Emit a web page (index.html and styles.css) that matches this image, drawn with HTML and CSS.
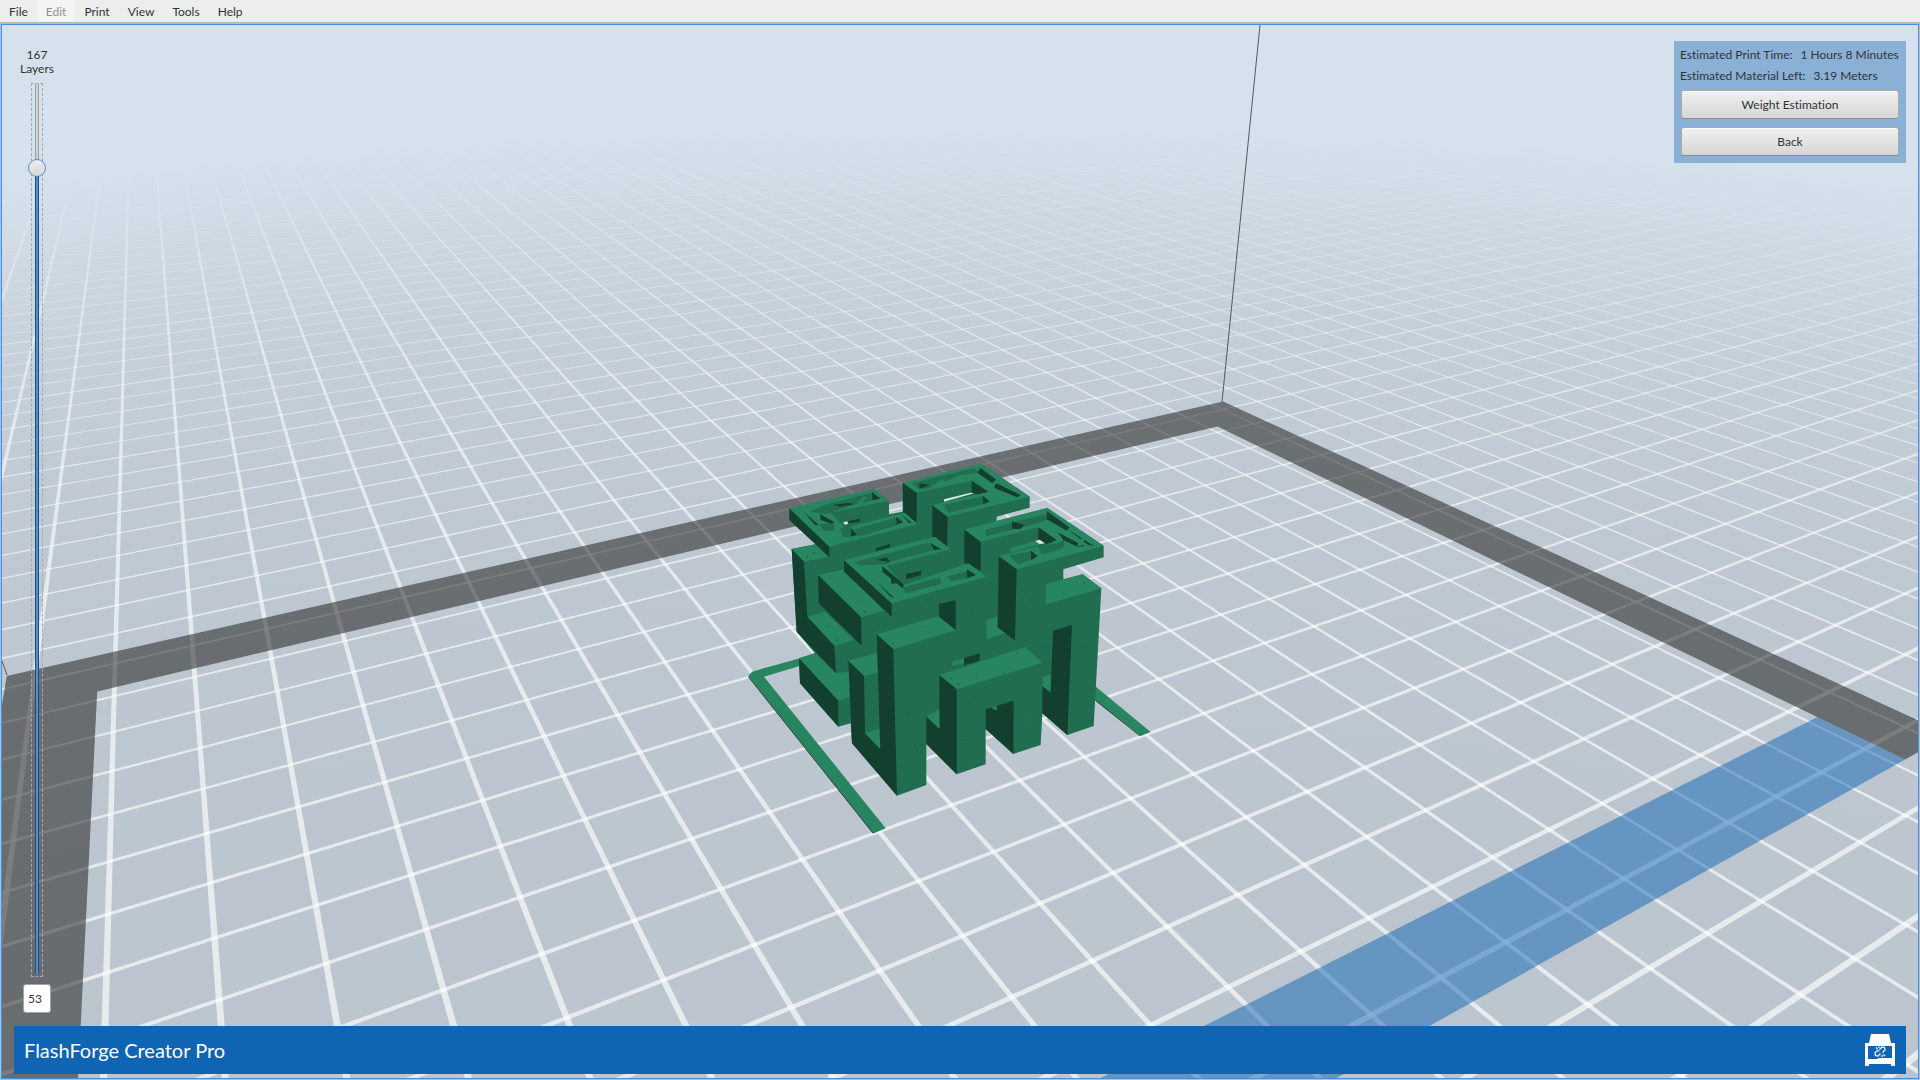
FILE: index.html
```html
<!DOCTYPE html>
<html lang="en">
<head>
<meta charset="utf-8">
<title>FlashForge Creator Pro</title>
<link rel="stylesheet" href="styles.css">
</head>
<body>
<nav class="menubar" aria-label="Main menu">
  <button type="button">File</button>
  <button type="button" disabled>Edit</button>
  <button type="button">Print</button>
  <button type="button">View</button>
  <button type="button">Tools</button>
  <button type="button">Help</button>
</nav>
<main class="viewport">
  <svg class="scene" viewBox="2 25 1916 1053" preserveAspectRatio="xMidYMid slice" role="img" aria-label="Print preview">
    <defs>
      <radialGradient id="fog" gradientUnits="userSpaceOnUse" cx="0" cy="0" r="1390" gradientTransform="translate(960 1500) scale(2.4 1)">
        <stop offset=".5" stop-color="#d5e1ec" stop-opacity="0"/>
        <stop offset=".64" stop-color="#d5e1ec" stop-opacity=".05"/>
        <stop offset=".72" stop-color="#d5e1ec" stop-opacity=".1"/>
        <stop offset=".79" stop-color="#d5e1ec" stop-opacity=".2"/>
        <stop offset=".863" stop-color="#d5e1ec" stop-opacity=".38"/>
        <stop offset=".935" stop-color="#d5e1ec" stop-opacity=".7"/>
        <stop offset=".99" stop-color="#d5e1ec"/>
      </radialGradient>
    </defs>
    <rect class="ground" x="0" y="0" width="1920" height="1080"/>
    <g id="tiles" class="tiles"></g>
    <g id="grid" class="grid"></g>
    <rect x="0" y="0" width="1920" height="1080" fill="url(#fog)"/>
    <g id="bed"></g>
    <path class="frame-line" d="M1260 25 1222 402M2 661 7 675"/>
    <svg x="730" y="440" width="430" height="400" viewBox="0 0 1290 1200">
      <path class="top" d="M66 695 205 656 255 640 300 650 102 710 467 1165 432 1180 55 708zM1095 738 1262 876 1232 888 1092 775z"/>
      <path class="side" d="M55 708 432 1180 428 1180 55 712zM1092 775 1232 888 1229 888 1092 779z"/>
      <path class="front" d="M518 128 755 72 899 170 899 203 800 230 800 243 952 204 1121 317 1121 352 1000 388 1000 418 1058 403 1114 445 1091 858 1012 885 937 820 932 915 850 942 767 867 767 973 680 1003 589 912 589 1035 501 1067 366 910 362 850 325 860 210 730 207 655 255 640 200 575 185 327 260 312 178 240 178 205 433 147 477 182 477 223 518 215z"/>
      <path class="top" d="M207 655 255 640 318 700 357 695 362 770 325 782zM185 327 260 312 298 350 222 365zM232 530 285 515 372 600 313 617zM264 405 343 388 462 512 393 532zM355 662 440 638 446 697 402 708zM404 880 449 866 451 928zM440 583 628 528 677 570 490 628zM628 705 885 622 938 668 680 748zM589 828 628 808 630 868zM667 665 702 655 702 672 667 676zM770 540 803 530 803 562 828 580 770 597zM948 433 1058 403 1114 445 948 493zM938 712 962 702 962 758 938 740z"/>
      <path class="side" d="M207 655 325 782 325 860 210 730zM185 327 222 365 232 530 313 617 318 700 200 575zM264 405 393 532 395 617 266 490zM355 662 402 708 405 880 451 928 440 583 490 628 501 1067 366 910zM627 492 677 480 677 570 627 530zM628 705 680 748 680 1003 589 912 589 830 629 868zM767 808 851 782 850 942 767 867zM702 655 749 640 749 662 702 676zM806 348 860 388 855 602 803 562zM969 572 1026 555 1012 885 937 820 937 738 962 758zM703 268 752 305 752 392 703 370zM607 195 653 230 651 328 607 290zM518 128 560 158 560 248 520 217zM178 205 298 318 298 352 178 240zM342 360 485 490 485 530 342 395z"/>
      <path class="top" d="M783 803 800 797 800 812z"/>
      <path class="gap" d="M642 178 722 158 732 160 650 183 642 185zM340 247 352 244 354 252 344 254zM915 303 930 299 944 310 926 313z"/>
      <path class="top" d="M518 128 755 72 899 170 653 230 607 195 775 155 725 122 560 158zM178 205 433 147 477 182 302 218 345 264 525 218 562 252 298 320zM342 360 615 290 662 328 470 377 520 435 715 370 770 410 485 490zM703 268 952 204 1121 317 862 388 806 348 970 308 925 262 752 305zM845 322 915 303 930 313 850 335 840 332z"/>
      <path class="front" d="M545 130 730 85 752 98 690 106 600 143 568 148zM640 195 762 168 775 190 655 218zM240 215 285 195 425 158 425 182 365 195 290 222zM268 252 312 250 312 272 280 272zM372 268 505 232 505 254 385 290zM330 264 362 260 362 290 338 292zM372 367 595 308 612 330 485 364 470 373 390 376zM520 442 635 410 632 432 525 460zM650 410 712 393 712 415 665 424zM765 270 945 222 952 240 880 262 770 288zM838 346 905 332 912 355 865 374zM932 345 1000 325 1002 300 985 310 925 318z"/>
      <path class="side" d="M568 130 600 135 568 146zM752 84 804 124 795 135 742 98zM790 125 872 165 862 172 795 145zM725 122 775 155 745 163 725 158zM758 168 780 184 760 192zM425 155 452 176 427 181zM308 195 358 188 372 193 330 200zM220 215 266 254 256 256zM270 222 312 246 306 252 272 240zM355 243 390 236 390 245 357 250zM498 232 520 246 500 254zM515 224 545 248 538 249zM363 265 382 284 363 290zM438 325 480 312 480 322 438 334zM528 402 573 392 573 405 528 418zM600 308 634 328 612 330zM440 360 470 352 480 366zM457 378 520 432 520 446 457 395zM710 388 738 405 712 415zM440 425 492 473 482 470zM482 404 506 428 484 432zM925 262 980 300 950 312 925 296zM950 213 1018 262 1010 272 950 238zM985 278 1062 318 1045 322 1000 300zM1010 266 1092 318 1074 314zM903 332 924 348 903 360zM845 244 882 254 870 268 847 266z"/>
      <path class="top" d="M600 143 635 118 655 130 615 140zM380 193 400 170 412 172 392 193zM625 410 640 408 665 432 650 436zM1040 318 1058 290 1066 292 1052 320zM918 345 935 340 960 348 925 352zM786 130 800 118 806 124 792 138z"/>
      <path class="specks" d="M402 515h5M385 490h4M318 600h6M290 560h4M683 733h5M660 715h4M486 612h4M520 590h4M230 350h4M250 338h4M585 560h4M740 700h4M860 640h4M1000 460h4M1060 430h4M560 700h4M530 820h4M560 930h4M720 790h4M700 900h4M610 350h4M590 480h4M720 520h4M900 480h4M940 620h4M1060 620h4M1040 780h4M890 840h4M820 700h4M430 570h4M350 660h4"/>
    </svg>
  </svg>
  <div class="overlay">
    <section class="layers">
      <label for="layer-slider">167<br>Layers</label>
      <div class="track">
        <input id="layer-slider" type="range" min="0" max="58" value="53">
      </div>
      <input class="layer-value" type="text" value="53" aria-label="Current layer">
    </section>
    <aside class="estimate">
      <p><span>Estimated Print Time:</span><span>1 Hours 8 Minutes</span></p>
      <p><span>Estimated Material Left:</span><span>3.19 Meters</span></p>
      <button type="button">Weight Estimation</button>
      <button type="button">Back</button>
    </aside>
  </div>
  <footer class="machine">
    <h1>FlashForge Creator Pro</h1>
    <button type="button" aria-label="Connect machine">
      <svg viewBox="0 0 30 32" width="30" height="32">
        <path fill="#fff" d="M6 0h18l2 9h4v23h-4v-2H4v2H0V9h4z"/>
        <path fill="#1064b4" d="M3 12h24v12H14l-2 1H3z"/>
        <path fill="none" stroke="#fff" stroke-width="1.200" d="M14.500 15.500l2.500-2.500 2.500.5.500 2.500-2.500 2.500M15.500 19.500l-2.500 2.500-2.500-.5-.5-2.500 2.500-2.500 2 .5M11 13.500l1.500 1.500M14 12.500v1.500M18.500 20.500l1.500 1.500M17 21v2"/>
      </svg>
    </button>
  </footer>
</main>
<script src="scene.js"></script>
</body>
</html>
```
FILE: styles.css
```css
* {
  box-sizing: border-box;
}

body {
  margin: 0;
  height: 100vh;
  display: flex;
  flex-direction: column;
  background: #ededed;
  color: #2e3436;
  font: 12px/14px Lato, "Noto Sans", sans-serif;
  font-variant-ligatures: none;
}

button,
input {
  font: inherit;
  color: inherit;
}

.menubar {
  display: flex;
  flex: none;
  height: 23px;
  border-bottom: 1px solid #b6b6b3;
}

.menubar button {
  padding: 2px 9px 0;
  border: 0;
  background: none;
}

.menubar button:disabled {
  background: #f4f4f4;
  color: #8f9191;
}

.viewport {
  position: relative;
  flex: 1;
  min-height: 0;
  display: flex;
  flex-direction: column;
  padding: 16px 12px 4px;
  border: 1px solid #4a90d9;
  box-shadow: 0 0 0 1px #a3c3e6;
  margin: 1px;
  overflow: hidden;
}

.scene {
  position: absolute;
  inset: 0;
  width: 100%;
  height: 100%;
}

.ground { fill: #bcc5cf; }
.tiles { fill: #bbc6cf; }
.grid { fill: #fff; fill-opacity: .65; }
.rim { fill: #282826; fill-opacity: .56; }
.strip { fill: #1064b4; fill-opacity: .5; }
.frame-line { fill: none; stroke: #55595c; stroke-width: 1; }
.top { fill: #278660; }
.front { fill: #206e4f; }
.side { fill: #133f2f; }
.gap { fill: #dfe4e9; }
.specks { fill: none; stroke: #185640; stroke-width: 3; }

.overlay {
  position: relative;
  flex: 1;
  min-height: 0;
  display: flex;
  justify-content: space-between;
  align-items: flex-start;
}

.layers {
  display: flex;
  flex-direction: column;
  align-items: center;
  gap: 7px;
  width: 46px;
  height: 100%;
  padding-top: 7px;
  text-align: center;
}

.track {
  flex: 1;
  min-height: 0;
  width: 12px;
  padding-bottom: 2px;
  border: 1px dashed #a4a9ac;
  display: flex;
  flex-direction: column;
  align-items: center;
}

.track input {
  appearance: none;
  writing-mode: vertical-lr;
  direction: rtl;
  flex: 1;
  min-height: 0;
  width: 18px;
  margin: 0;
  background:
    linear-gradient(90deg, #2b4b6e 1px, #4a90d9 1px, #4a90d9 3px, #2b4b6e 3px) center bottom / 4px 91% no-repeat,
    linear-gradient(90deg, #a0a0a0 1px, #d0d0d0 1px, #d0d0d0 3px, #a0a0a0 3px) center / 4px 100% no-repeat;
}

.track input::-webkit-slider-thumb {
  appearance: none;
  width: 18px;
  height: 18px;
  border: 1px solid #4a90d9;
  border-radius: 50%;
  background: linear-gradient(#ececec, #d8d8d8);
}

.layer-value {
  width: 28px;
  height: 29px;
  padding: 0 4px;
  border: 1px solid #a5a5a5;
  border-radius: 3px;
  background: #fff;
}

.estimate {
  display: flex;
  flex-direction: column;
  width: 232px;
  padding: 3px 7px 7px;
  background: #8ab0d6;
}

.estimate p {
  display: flex;
  gap: 8px;
  margin: 0 -1px;
  line-height: 21px;
  white-space: nowrap;
}

.estimate button {
  height: 29px;
  margin-top: 8px;
  padding: 0;
  border: 1px solid #a9a9a6;
  border-bottom-color: #8c8c88;
  border-radius: 3px;
  background: linear-gradient(#f0f0f0, #d6d6d6);
  box-shadow: inset 0 1px #fff;
}

.estimate p + button {
  margin-top: 4px;
}

.machine {
  position: relative;
  flex: none;
  display: flex;
  align-items: center;
  justify-content: space-between;
  height: 48px;
  margin-top: 13px;
  padding: 0 11px 0 10px;
  background: #1064b4;
  color: #fff;
}

.machine h1 {
  margin: 0;
  font-size: 20px;
  line-height: 24px;
  font-weight: 400;
}

.machine button {
  display: flex;
  padding: 0;
  border: 0;
  background: none;
}
```
FILE: scene.js
```js
// Camera: maps floor coordinates (in grid cells) to scene pixels.
function project([u, v]) {
  const w = 1 + 0.0259985 * u - 0.0450608 * v;
  return [
    (113.206 + 89.3055 * u - 6.1343 * v) / w,
    (731.901 - 2.5359 * u + 4.3691 * v) / w,
    w,
  ];
}

function polygon(points, name) {
  const list = points.map(p => project(p).slice(0, 2).map(n => n.toFixed(1)).join(",")).join(" ");
  return `<polygon${name ? ` class="${name}"` : ""} points="${list}"/>`;
}

const rect = (u0, v0, u1, v1, name) => polygon([[u0, v0], [u1, v0], [u1, v1], [u0, v1]], name);

const NEAR = 0.12;
const FAR = 90;
const HALF = 0.03;

// Grid lines, each a thin floor strip cut off in front of the camera.
let grid = "";
for (let i = -40; i < 80; i++) {
  const vMax = Math.min(FAR, (1 + 0.0259985 * i - NEAR) / 0.0450608);
  if (vMax > -FAR) grid += rect(i - HALF, -FAR, i + HALF, vMax);
}
for (let i = -90; i < 80; i++) {
  const uMin = Math.max(-FAR, (NEAR - 1 + 0.0450608 * i) / 0.0259985);
  if (uMin < FAR) grid += rect(uMin, i - HALF, FAR, i + HALF);
}
document.getElementById("grid").innerHTML = grid;

// Alternate floor tiles are slightly cooler.
let tiles = "";
for (let u = -20; u < 40; u++) {
  for (let v = -24; v < 26; v++) {
    if ((u + v) % 2 === 0 && project([u, v + 1])[2] > NEAR && project([u, v])[2] > NEAR) {
      tiles += rect(u, v, u + 1, v + 1);
    }
  }
}
document.getElementById("tiles").innerHTML = tiles;

// Build plate rim and the coloured front strip.
document.getElementById("bed").innerHTML =
  polygon([[-1.35, 18], [-1.35, -2.38], [21.33, -2.38], [21.33, 12.39], [20.22, 12.39], [20.22, -1.26], [-0.21, -1.26], [-0.21, 18]], "rim") +
  rect(4, 11.27, 20.22, 12.39, "strip");
```
